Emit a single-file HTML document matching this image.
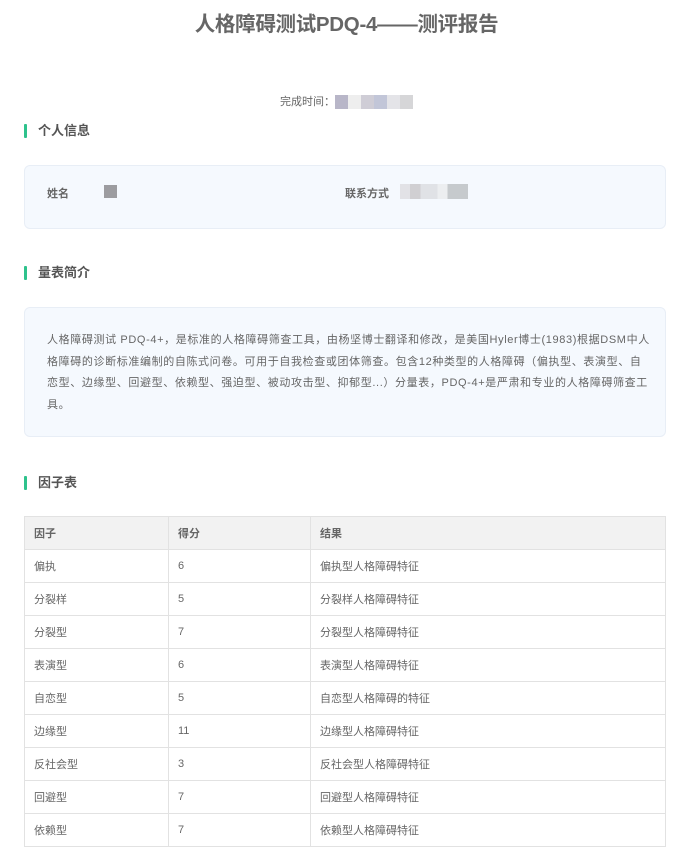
<!DOCTYPE html>
<html><head><meta charset="utf-8"><style>
*{margin:0;padding:0;box-sizing:border-box}
body{width:693px;height:830px;overflow:hidden;background:#fff;font-family:"Liberation Sans","Noto Sans CJK SC",sans-serif;color:#666;position:relative}
.abs{position:absolute}
h1{position:absolute;left:0;width:693px;top:7px;text-align:center;font-size:20.5px;font-weight:bold;color:#666;letter-spacing:-0.3px}
.time{left:0;width:693px;top:93px;text-align:center;font-size:11px;color:#666}
.sec{left:24px;font-size:13px;font-weight:bold;color:#555;padding-left:14px;height:14px;line-height:14px}
.sec:before{content:"";position:absolute;left:0;top:0;width:3px;height:14px;background:#2ec28c;border-radius:1px}
.box{left:24px;width:642px;background:#f5f9fe;border:1px solid #e8eef6;border-radius:6px}
.b{display:inline-block;width:13px;height:14px;vertical-align:middle}
table{position:absolute;left:24px;top:516px;width:642px;border-collapse:collapse;font-size:11px;color:#666}
td,th{border:1px solid #e2e2e2;height:33px;padding:0 9px;text-align:left;font-weight:normal;vertical-align:middle}
th{background:#f2f2f2;font-weight:bold;color:#666}
td.s{vertical-align:top;padding-top:10px}
</style></head><body>
<h1>人格障碍测试PDQ-4——测评报告</h1>
<div class="abs time">完成时间：<span class="b" style="background:#b8b6c8"></span><span class="b" style="background:#eee"></span><span class="b" style="background:#cfcdd6"></span><span class="b" style="background:#c2c6d8"></span><span class="b" style="background:#e4e4e8"></span><span class="b" style="background:#d6d6d8"></span></div>
<div class="abs sec" style="top:124px">个人信息</div>
<div class="abs box" style="top:165px;height:64px">
<div class="abs" style="left:22px;top:19px;font-size:11px;font-weight:bold;color:#666">姓名</div>
<div class="abs" style="left:79px;top:19px;width:13px;height:13px;background:#9c9ca0"></div>
<div class="abs" style="left:320px;top:19px;font-size:11px;font-weight:bold;color:#666">联系方式</div>
<div class="abs" style="left:375px;top:18px;width:68px;height:15px;background:linear-gradient(90deg,#e2e2e6 0 15%,#d0cfd2 15% 30%,#e0e2e6 30% 55%,#eceef0 55% 70%,#c6cacd 70%)"></div>
</div>
<div class="abs sec" style="top:266px">量表简介</div>
<div class="abs box" style="top:307px;height:130px">
<div class="abs" style="left:22px;top:22px;width:606px;font-size:11px;letter-spacing:0.62px;line-height:21.7px;color:#666">人格障碍测试 PDQ-4+，是标准的人格障碍筛查工具，由杨坚博士翻译和修改，是美国Hyler博士(1983)根据DSM中人格障碍的诊断标准编制的自陈式问卷。可用于自我检查或团体筛查。包含12种类型的人格障碍（偏执型、表演型、自恋型、边缘型、回避型、依赖型、强迫型、被动攻击型、抑郁型...）分量表，PDQ-4+是严肃和专业的人格障碍筛查工具。</div>
</div>
<div class="abs sec" style="top:476px">因子表</div>
<table>
<colgroup><col style="width:144px"><col style="width:142px"><col></colgroup>
<tr><th>因子</th><th>得分</th><th>结果</th></tr>
<tr><td>偏执</td><td class="s">6</td><td>偏执型人格障碍特征</td></tr>
<tr><td>分裂样</td><td class="s">5</td><td>分裂样人格障碍特征</td></tr>
<tr><td>分裂型</td><td class="s">7</td><td>分裂型人格障碍特征</td></tr>
<tr><td>表演型</td><td class="s">6</td><td>表演型人格障碍特征</td></tr>
<tr><td>自恋型</td><td class="s">5</td><td>自恋型人格障碍的特征</td></tr>
<tr><td>边缘型</td><td class="s">11</td><td>边缘型人格障碍特征</td></tr>
<tr><td>反社会型</td><td class="s">3</td><td>反社会型人格障碍特征</td></tr>
<tr><td>回避型</td><td class="s">7</td><td>回避型人格障碍特征</td></tr>
<tr><td>依赖型</td><td class="s">7</td><td>依赖型人格障碍特征</td></tr>
</table>
</body></html>
